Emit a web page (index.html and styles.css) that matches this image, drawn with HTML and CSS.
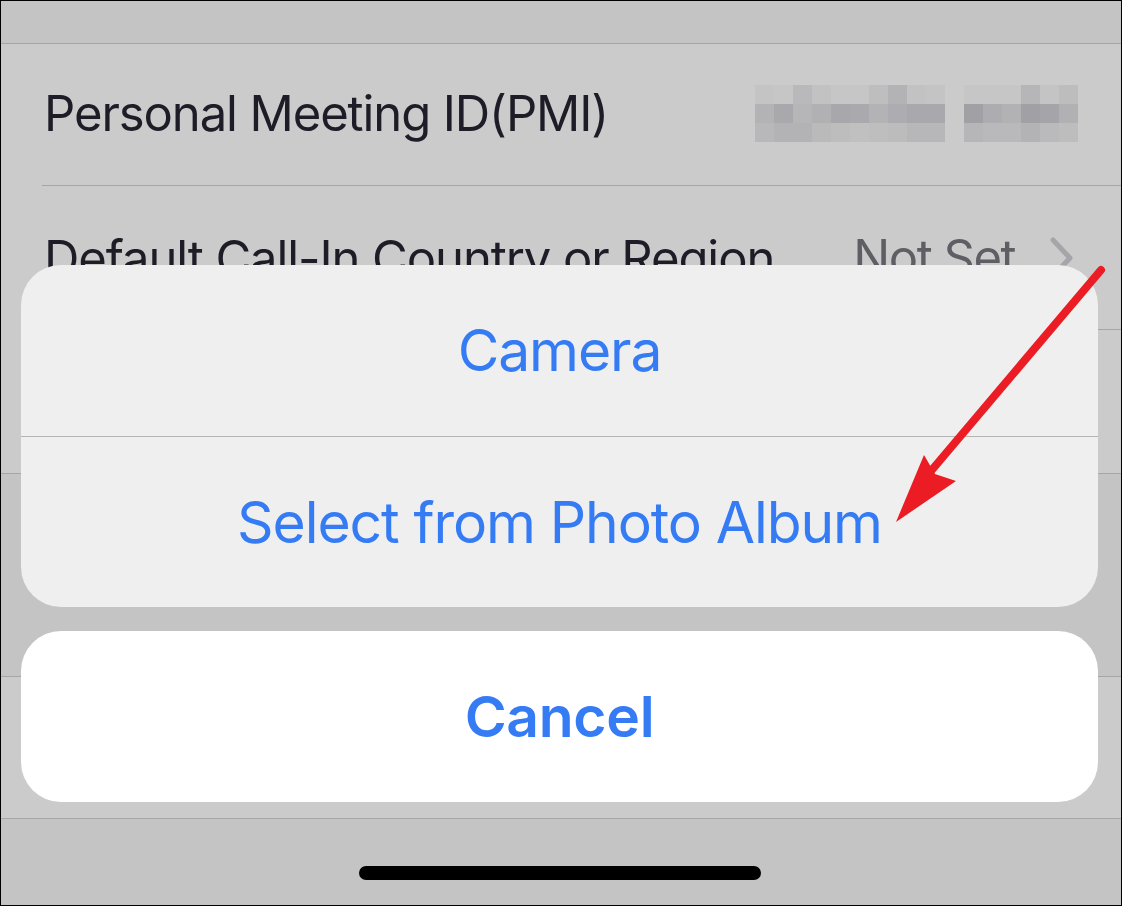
FILE: index.html
```html
<!DOCTYPE html>
<html lang="en">
<head>
<meta charset="utf-8">
<title>Profile photo action sheet</title>
<link rel="stylesheet" href="styles.css">
</head>
<body>
<div class="screen">
  <div class="backdrop">
    <div class="header"></div>
    <div class="group">
      <div class="row">
        <div class="cell">
          <span class="label">Personal Meeting ID(PMI)</span>
          <div class="pixels">
            <div class="pxblock">
              <i style="background:#c4c4c4"></i><i style="background:#c6c6c6"></i><i style="background:#b9b9bb"></i><i style="background:#c2c2c2"></i><i style="background:#c6c6c6"></i><i style="background:#c6c6c6"></i><i style="background:#bebebe"></i><i style="background:#b3b3b5"></i><i style="background:#c2c2c2"></i><i style="background:#c4c4c4"></i>
              <i style="background:#b3b3b5"></i><i style="background:#a9a9ad"></i><i style="background:#b6b6b8"></i><i style="background:#b1b1b3"></i><i style="background:#a8a8ac"></i><i style="background:#aaaaae"></i><i style="background:#b3b3b5"></i><i style="background:#adadb1"></i><i style="background:#a9a9ad"></i><i style="background:#a9a9ad"></i>
              <i style="background:#b8b8ba"></i><i style="background:#b3b3b5"></i><i style="background:#b3b3b5"></i><i style="background:#bababa"></i><i style="background:#bdbdbd"></i><i style="background:#c0c0c0"></i><i style="background:#bebebe"></i><i style="background:#bcbcbc"></i><i style="background:#b7b7b9"></i><i style="background:#b7b7b9"></i>
            </div>
            <div class="pxblock small">
              <i style="background:#c6c6c6"></i><i style="background:#c6c6c6"></i><i style="background:#c6c6c6"></i><i style="background:#b6b6b8"></i><i style="background:#c4c4c4"></i><i style="background:#bdbdbd"></i>
              <i style="background:#a1a1a5"></i><i style="background:#adadb1"></i><i style="background:#b2b2b4"></i><i style="background:#a1a1a5"></i><i style="background:#a5a5a9"></i><i style="background:#b1b1b3"></i>
              <i style="background:#b6b6b8"></i><i style="background:#b9b9bb"></i><i style="background:#b9b9bb"></i><i style="background:#b3b3b5"></i><i style="background:#bababc"></i><i style="background:#bdbdbd"></i>
            </div>
          </div>
        </div>
      </div>
      <div class="row row-tall">
        <div class="cell">
          <span class="label">Default Call-In Country or Region</span>
          <span class="value">Not Set
            <svg class="chev" width="24" height="42" viewBox="0 0 24 42"><path d="M3 3 L20 21 L3 39" fill="none" stroke="#a5a5aa" stroke-width="5" stroke-linecap="round" stroke-linejoin="round"/></svg>
          </span>
        </div>
      </div>
      <div class="row row-tall last">
        <div class="cell"></div>
      </div>
    </div>
    <div class="gap"></div>
    <div class="group single">
      <div class="row row-low last"><div class="cell"></div></div>
    </div>
  </div>

  <div class="sheet">
    <div class="sheet-group">
      <div class="action">Camera</div>
      <div class="action">Select from Photo Album</div>
    </div>
    <div class="sheet-cancel">
      <div class="action cancel">Cancel</div>
    </div>
  </div>

  <div class="homebar"></div>

  <svg class="arrow" width="1122" height="906" viewBox="0 0 1122 906">
    <line x1="1101" y1="270" x2="931" y2="471" stroke="#ec1c24" stroke-width="8" stroke-linecap="round"/>
    <polygon points="896,522 924,455 935,474 956,481" fill="#ec1c24"/>
  </svg>
</div>
</body>
</html>
```

FILE: styles.css
```css
* { box-sizing: border-box; }

html, body {
  margin: 0;
  padding: 0;
  background: #c4c4c4;
}

.screen {
  position: relative;
  width: 1122px;
  height: 906px;
  border: 1px solid #000;
  background: #c4c4c4;
  overflow: hidden;
  font-family: Inter, "Noto Sans", "Liberation Sans", sans-serif;
}

.backdrop {
  display: flex;
  flex-direction: column;
}

.header {
  height: 43px;
  border-bottom: 1px solid #a6a6a6;
}

.group {
  background: #cbcbcb;
  border-bottom: 1px solid #a6a6a6;
}

.row {
  padding-left: 41px;
}

.row .cell {
  height: 142px;
  border-bottom: 1px solid #a6a6a6;
  display: flex;
  align-items: center;
  justify-content: space-between;
  padding-right: 42px;
}

.row-tall .cell { height: 144px; padding-right: 47px; }
.row-low .cell { height: 141px; }

.row.last .cell { border-bottom: none; }
.row-tall.last .cell { height: 143px; }

.label {
  font-size: 49px;
  color: #1e1d27;
  letter-spacing: -1.1px;
  padding-left: 2px;
  padding-bottom: 2px;
}

.row-tall .label { padding-bottom: 0; padding-top: 1px; }

.value {
  display: flex;
  align-items: center;
  gap: 35px;
  font-size: 49px;
  color: #5e5e64;
  letter-spacing: -1.5px;
}

.chev { display: block; }

.pixels {
  display: flex;
  gap: 19px;
  margin-right: 1px;
  margin-top: -3px;
}

.pxblock {
  display: grid;
  grid-template-columns: repeat(10, 19px);
  grid-auto-rows: 19px;
}

.pxblock.small {
  grid-template-columns: repeat(6, 19px);
}

.pxblock i { display: block; }

.gap {
  height: 203px;
  border-bottom: 1px solid #a6a6a6;
}

.group.single { border-top: none; }

/* action sheet overlay */
.sheet {
  position: absolute;
  left: 20px;
  top: 264px;
  width: 1077px;
  display: flex;
  flex-direction: column;
  gap: 24px;
}

.sheet-group {
  background: #efefef;
  border-radius: 40px;
  overflow: hidden;
  display: flex;
  flex-direction: column;
}

.sheet-group .action + .action {
  border-top: 1px solid #b4b4b4;
}

.sheet-cancel {
  background: #ffffff;
  border-radius: 40px;
  overflow: hidden;
}

.action {
  height: 171px;
  display: flex;
  align-items: center;
  justify-content: center;
  font-size: 57px;
  color: #357cf4;
  letter-spacing: -1.1px;
}

.action.cancel {
  font-weight: 600;
  letter-spacing: -0.3px;
}

.homebar {
  position: absolute;
  left: 358px;
  top: 865px;
  width: 402px;
  height: 14px;
  border-radius: 7px;
  background: #000;
}

.arrow {
  position: absolute;
  left: -1px;
  top: -1px;
  pointer-events: none;
}
```
